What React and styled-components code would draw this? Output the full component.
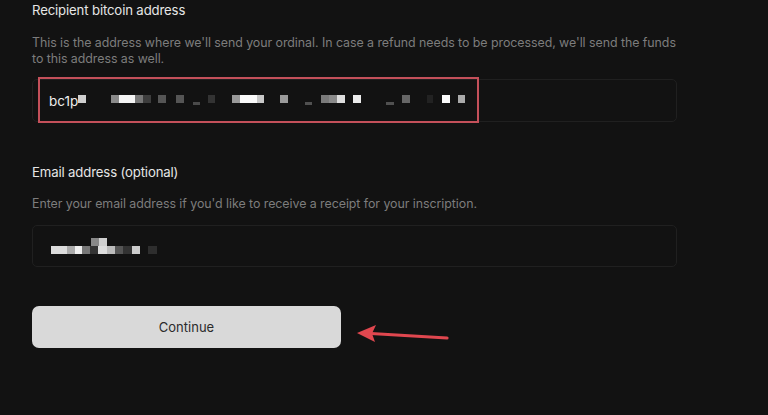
import React from "react";
import styled, { createGlobalStyle } from "styled-components";

const Global = createGlobalStyle`
  html, body { margin: 0; padding: 0; background: #121212; }
  body { font-family: Inter, "Noto Sans", "Liberation Sans", sans-serif; -webkit-font-smoothing: antialiased; }
  #root { min-height: 415px; background: #121212; }
`;

const Page = styled.div`
  width: 645px;
  padding: 0 0 0 32px;
  display: flex;
  flex-direction: column;
`;

const Field = styled.section`
  display: flex;
  flex-direction: column;
  margin-top: ${(p) => p.$top || 0}px;
`;

const Label = styled.div`
  font-size: 13.2px;
  line-height: 20px;
  color: #e6e6e6;
  letter-spacing: -0.15px;
`;

const Help = styled.p`
  margin: ${(p) => p.$top}px 0 0;
  font-size: 12.4px;
  line-height: 16px;
  color: #7d7d7d;
  letter-spacing: -0.05px;
`;

const InputWrap = styled.div`
  position: relative;
  margin-top: ${(p) => p.$top}px;
  height: ${(p) => p.$h}px;
  border: 1px solid #202020;
  border-radius: 5px;
  background: #121212;
  box-sizing: border-box;
  display: flex;
  align-items: center;
  padding-left: 16px;
`;

const Value = styled.span`
  font-size: 13.5px;
  color: #ededed;
  line-height: 16px;
  display: flex;
  align-items: center;
`;

const Highlight = styled.div`
  position: absolute;
  left: 5px;
  top: -3px;
  width: 441px;
  height: 46px;
  border: 2px solid #c4505a;
  box-sizing: border-box;
  pointer-events: none;
`;

const Actions = styled.div`
  display: flex;
  align-items: flex-start;
  gap: 16px;
  margin-top: 39px;
`;

const Button = styled.button`
  width: 309px;
  height: 42px;
  border: none;
  border-radius: 7px;
  background: #d9d9d9;
  color: #2b2b2b;
  font-family: inherit;
  font-size: 13px;
  cursor: pointer;
`;

const Arrow = styled.svg`
  margin-top: 17px;
  flex: none;
`;

const Mosaic = styled.svg`
  display: block;
  flex: none;
`;

const addrBlocks = [
  [0, 0, 8, "#cfcfcf"],
  [33, 0, 8, "#8a8a8a"],
  [41, 0, 16, "#f4f4f4"],
  [57, 0, 8, "#777"],
  [65, 0, 8, "#3d3d3d"],
  [80, 0, 8, "#555"],
  [98, 0, 8, "#555"],
  [115, 7, 7, "#4a4a4a", 3],
  [130, 0, 7, "#333"],
  [154, 0, 8, "#999"],
  [162, 0, 17, "#fafafa"],
  [179, 0, 7, "#c8c8c8"],
  [202, 0, 8, "#9a9a9a"],
  [227, 7, 7, "#505050", 3],
  [243, 0, 8, "#7a7a7a"],
  [251, 0, 8, "#8a8a8a"],
  [259, 0, 8, "#dedede"],
  [275, 0, 8, "#ececec"],
  [308, 7, 8, "#505050", 3],
  [324, 0, 8, "#666"],
  [349, 0, 6, "#222"],
  [364, 0, 8, "#fafafa"],
  [380, 0, 7, "#aaa"],
];

const mailBlocks = [
  [2, 8, 16, "#dcdcdc"],
  [18, 8, 8, "#aaa"],
  [26, 8, 7, "#eee"],
  [33, 8, 8, "#777"],
  [41, 8, 8, "#333"],
  [42, 0, 8, "#888"],
  [50, 0, 8, "#cfcfcf"],
  [49, 8, 9, "#ddd"],
  [58, 8, 8, "#bbb"],
  [66, 8, 8, "#555"],
  [74, 8, 9, "#333"],
  [83, 8, 8, "#ccc"],
  [99, 8, 9, "#2e2e2e"],
];

function Pixels({ blocks, width, height, y0 }) {
  return (
    <Mosaic width={width} height={height} viewBox={`0 0 ${width} ${height}`}>
      {blocks.map(([x, y, w, c, h], i) => (
        <rect key={i} x={x} y={y + y0} width={w} height={h || 8} fill={c} />
      ))}
    </Mosaic>
  );
}

export default function App() {
  return (
    <>
      <Global />
      <Page>
        <Field>
          <Label>Recipient bitcoin address</Label>
          <Help $top={15}>
            This is the address where we'll send your ordinal. In case a refund needs to be processed, we'll send the funds
            to this address as well.
          </Help>
          <InputWrap $top={12} $h={43}>
            <Value>
              bc1p
              <Pixels blocks={addrBlocks} width={390} height={12} y0={0} />
            </Value>
            <Highlight />
          </InputWrap>
        </Field>
        <Field $top={40}>
          <Label>Email address (optional)</Label>
          <Help $top={14}>Enter your email address if you'd like to receive a receipt for your inscription.</Help>
          <InputWrap $top={13} $h={42}>
            <Value>
              <Pixels blocks={mailBlocks} width={110} height={18} y0={1} />
            </Value>
          </InputWrap>
        </Field>
        <Actions>
          <Button>Continue</Button>
          <Arrow width="92" height="22" viewBox="0 0 92 22">
            <line x1="14" y1="10.5" x2="90" y2="15" stroke="#e0474f" strokeWidth="3.2" strokeLinecap="round" />
            <polygon points="0,10 19,2 15,10.5 18,19" fill="#e0474f" />
          </Arrow>
        </Actions>
      </Page>
    </>
  );
}
